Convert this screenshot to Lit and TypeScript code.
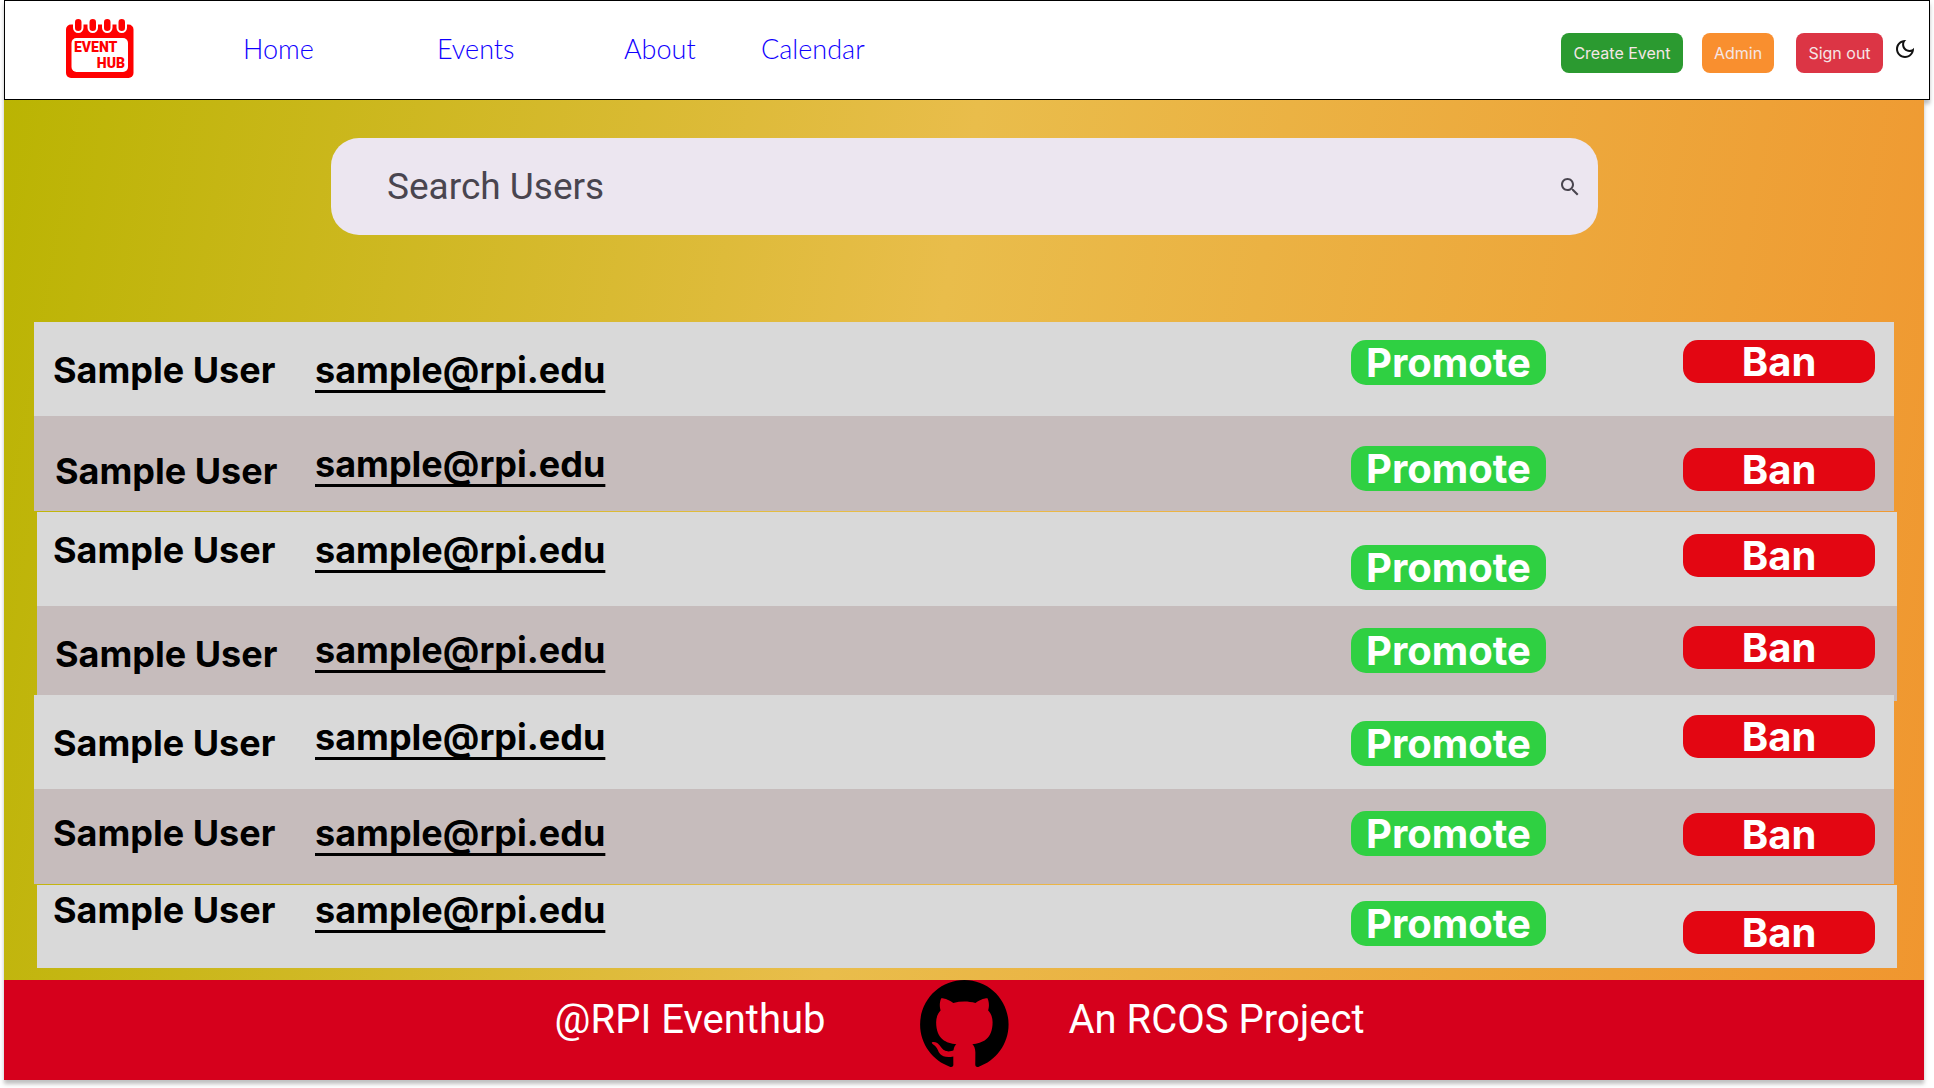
import { LitElement, html, css, svg } from "lit";
import { customElement, property } from "lit/decorators.js";
import { classMap } from "lit/directives/class-map.js";

interface UserRow {
  name: string;
  email: string;
  // Vertical step of each cell: name, email, promote, ban.
  steps: [number, number, number, number];
  shade?: boolean;
  inset?: boolean;
  nudge?: boolean;
  split?: boolean;
  tuck?: boolean;
  short?: boolean;
}

const NAME = "Sample User";
const EMAIL = "sample@rpi.edu";

const USERS: UserRow[] = [
  { name: NAME, email: EMAIL, steps: [26, 26, 18, 18] },
  { name: NAME, email: EMAIL, steps: [33, 26, 30, 32], shade: true, nudge: true },
  { name: NAME, email: EMAIL, steps: [16, 16, 33, 22], inset: true, split: true },
  { name: NAME, email: EMAIL, steps: [26, 22, 22, 20], shade: true, inset: true, nudge: true, tuck: true },
  { name: NAME, email: EMAIL, steps: [26, 20, 26, 20] },
  { name: NAME, email: EMAIL, steps: [22, 22, 22, 24], shade: true },
  { name: NAME, email: EMAIL, steps: [3, 3, 16, 26], inset: true, split: true, short: true },
];

const logo = svg`
  <svg class="logo" viewBox="0 0 68 60" role="img" aria-label="Event Hub">
    <rect x="0" y="5.5" width="67.5" height="53.5" rx="5" fill="#ff0000" />
    <g fill="#ff0000" stroke="#ffffff" stroke-width="2">
      <rect x="8" y="-1" width="8.5" height="14" rx="4.2" />
      <rect x="22.5" y="-1" width="8.5" height="14" rx="4.2" />
      <rect x="37" y="-1" width="8.5" height="14" rx="4.2" />
      <rect x="51.5" y="-1" width="8.5" height="14" rx="4.2" />
    </g>
    <rect x="5.5" y="19" width="56.5" height="34" rx="5" fill="#ffffff" />
    <text x="8" y="33" class="logo-text">EVENT</text>
    <text x="59" y="49" class="logo-text" text-anchor="end">HUB</text>
  </svg>`;

const moonIcon = svg`
  <svg class="icon" viewBox="0 0 24 24" aria-hidden="true">
    <path fill="currentColor" d="M9.37,5.51C9.19,6.15,9.1,6.82,9.1,7.5c0,4.08,3.32,7.4,7.4,7.4c0.68,0,1.35-0.09,1.99-0.27C17.45,17.19,14.93,19,12,19c-3.86,0-7-3.14-7-7C5,9.07,6.81,6.55,9.37,5.51z M12,3c-4.97,0-9,4.03-9,9s4.03,9,9,9s9-4.03,9-9c0-0.46-0.04-0.92-0.1-1.36c-0.98,1.37-2.58,2.26-4.4,2.26c-2.98,0-5.4-2.42-5.4-5.4c0-1.81,0.89-3.42,2.26-4.4C12.92,3.04,12.46,3,12,3z" />
  </svg>`;

const searchIcon = svg`
  <svg class="icon" viewBox="0 0 24 24" aria-hidden="true">
    <path fill="currentColor" d="M15.5 14h-.79l-.28-.27C15.41 12.59 16 11.11 16 9.5 16 5.91 13.09 3 9.5 3S3 5.91 3 9.5 5.91 16 9.5 16c1.61 0 3.09-.59 4.23-1.57l.27.28v.79l5 4.99L20.49 19l-4.99-5zm-6 0C7.01 14 5 11.99 5 9.5S7.01 5 9.5 5 14 7.01 14 9.5 11.99 14 9.5 14z" />
  </svg>`;

const githubIcon = svg`
  <svg class="github" viewBox="0 0 98 96" aria-hidden="true">
    <path fill="#000000" fill-rule="evenodd" d="M48.854 0C21.839 0 0 22 0 49.217c0 21.756 13.993 40.172 33.405 46.69 2.427.49 3.316-1.059 3.316-2.362 0-1.141-.08-5.052-.08-9.127-13.59 2.934-16.42-5.867-16.42-5.867-2.184-5.704-5.42-7.17-5.42-7.17-4.448-3.015.324-3.015.324-3.015 4.934.326 7.523 5.052 7.523 5.052 4.367 7.496 11.404 5.378 14.235 4.074.404-3.178 1.699-5.378 3.074-6.6-10.839-1.141-22.243-5.378-22.243-24.283 0-5.378 1.94-9.778 5.014-13.2-.485-1.222-2.184-6.275.486-13.038 0 0 4.125-1.304 13.426 5.052a46.97 46.97 0 0 1 12.214-1.63c4.125 0 8.33.571 12.213 1.63 9.302-6.356 13.427-5.052 13.427-5.052 2.67 6.763.97 11.816.485 13.038 3.155 3.422 5.015 7.822 5.015 13.2 0 18.905-11.404 23.06-22.324 24.283 1.78 1.548 3.316 4.481 3.316 9.126 0 6.6-.08 11.897-.08 13.526 0 1.304.89 2.853 3.316 2.364 19.412-6.52 33.405-24.935 33.405-46.691C97.707 22 75.788 0 48.854 0z" />
  </svg>`;

@customElement("site-header")
export class SiteHeader extends LitElement {
  static styles = css`
    :host {
      display: block;
    }
    .bar {
      box-sizing: border-box;
      display: flex;
      align-items: flex-start;
      min-height: 100px;
      padding: 0 12px 0 61px;
      border: 1px solid #000000;
      background: #ffffff;
      box-shadow: 0 4px 4px rgba(0, 0, 0, 0.25);
    }
    .home {
      display: block;
      margin-top: 18px;
    }
    .logo {
      display: block;
      width: 68px;
      height: 60px;
    }
    .logo-text {
      font: 900 14px Roboto, sans-serif;
      fill: #ff0000;
    }
    .nav {
      display: grid;
      grid-template-columns: 194px 187px 137px auto;
      margin: 30px 0 0 109px;
    }
    .link {
      font: 300 27px/36px Lato, sans-serif;
      color: #1000ff;
      text-decoration: none;
    }
    .actions {
      display: flex;
      align-items: flex-start;
      margin: 32px 0 0 auto;
    }
    .button {
      height: 40px;
      padding: 0;
      border: 0;
      border-radius: 8px;
      font: 400 16px/24px Inter, sans-serif;
      color: #f5e6e6;
    }
    .create {
      width: 122px;
      margin-right: 19px;
      background: #2b9a30;
    }
    .admin {
      width: 72px;
      margin-right: 22px;
      background: #f98f2f;
    }
    .signout {
      width: 87px;
      margin-right: 10px;
      background: #dc3545;
    }
    .theme {
      margin-top: 4px;
      padding: 0;
      border: 0;
      background: none;
      color: #111111;
    }
    .icon {
      display: block;
      width: 24px;
      height: 24px;
    }
  `;

  render() {
    return html`
      <header class="bar">
        <a class="home" href="#">${logo}</a>
        <nav class="nav">
          <a class="link" href="#home">Home</a>
          <a class="link" href="#events">Events</a>
          <a class="link" href="#about">About</a>
          <a class="link" href="#calendar">Calendar</a>
        </nav>
        <div class="actions">
          <button class="button create" type="button">Create Event</button>
          <button class="button admin" type="button">Admin</button>
          <button class="button signout" type="button">Sign out</button>
          <button class="theme" type="button" aria-label="Dark mode">${moonIcon}</button>
        </div>
      </header>
    `;
  }
}

@customElement("user-search")
export class UserSearch extends LitElement {
  static styles = css`
    :host {
      display: block;
    }
    .box {
      display: flex;
      align-items: center;
      min-height: 97px;
      padding: 0 16px 0 56px;
      border-radius: 28px;
      background: #ece6f0;
      color: #49454f;
    }
    .field {
      flex: 1;
      min-width: 0;
      padding: 0;
      border: 0;
      outline: 0;
      background: none;
      font: 400 37px/48px Roboto, sans-serif;
      color: inherit;
    }
    .field::placeholder {
      color: inherit;
      opacity: 1;
    }
    .go {
      padding: 0;
      border: 0;
      background: none;
      color: inherit;
    }
    .icon {
      display: block;
      width: 24px;
      height: 24px;
    }
  `;

  render() {
    return html`
      <form class="box" role="search" @submit=${(e: Event) => e.preventDefault()}>
        <input class="field" type="text" placeholder="Search Users" aria-label="Search Users" />
        <button class="go" type="submit" aria-label="Search">${searchIcon}</button>
      </form>
    `;
  }
}

@customElement("user-table")
export class UserTable extends LitElement {
  static styles = css`
    :host {
      display: block;
    }
    .table,
    .body {
      display: flex;
      flex-direction: column;
    }
    .row {
      box-sizing: border-box;
      display: grid;
      grid-template-columns: 262px 1fr 332px 192px;
      align-items: start;
      min-height: 94px;
      margin-right: 3px;
      padding: 0 19px;
      background: #d9d9d9;
      font: 700 36px/44px Inter, sans-serif;
      color: #000000;
    }
    .shade {
      min-height: 95px;
      background: #c6bcbc;
    }
    .inset {
      margin-right: 0;
      margin-left: 3px;
      padding: 0 22px 0 16px;
    }
    .split {
      margin-top: 1px;
    }
    .tuck {
      margin-bottom: -6px;
    }
    .short {
      min-height: 83px;
    }
    .cell {
      padding: 0;
      font: inherit;
      text-align: left;
    }
    .nudge .name {
      padding-left: 2px;
    }
    .step-3 {
      margin-top: 3px;
    }
    .step-16 {
      margin-top: 16px;
    }
    .step-18 {
      margin-top: 18px;
    }
    .step-20 {
      margin-top: 20px;
    }
    .step-22 {
      margin-top: 22px;
    }
    .step-24 {
      margin-top: 24px;
    }
    .step-26 {
      margin-top: 26px;
    }
    .step-30 {
      margin-top: 30px;
    }
    .step-32 {
      margin-top: 32px;
    }
    .step-33 {
      margin-top: 33px;
    }
    .email {
      color: inherit;
      text-decoration: underline;
      text-decoration-thickness: 3px;
      text-underline-offset: 7px;
      text-decoration-skip-ink: none;
    }
    .action {
      display: block;
      padding: 0;
      border: 0;
      border-radius: 15px;
      font: 700 40px/43px Inter, sans-serif;
      color: #ffffff;
    }
    .promote {
      width: 195px;
      height: 45px;
      background: #2fd042;
    }
    .ban {
      width: 192px;
      height: 43px;
      background: #e30612;
    }
  `;

  @property({ attribute: false }) users: UserRow[] = [];

  private row(user: UserRow) {
    const [name, email, promote, ban] = user.steps;
    const classes = {
      row: true,
      shade: !!user.shade,
      inset: !!user.inset,
      nudge: !!user.nudge,
      split: !!user.split,
      tuck: !!user.tuck,
      short: !!user.short,
    };
    return html`
      <tr class=${classMap(classes)}>
        <th class="cell name step-${name}" scope="row">${user.name}</th>
        <td class="cell step-${email}">
          <a class="email" href="mailto:${user.email}">${user.email}</a>
        </td>
        <td class="cell step-${promote}">
          <button class="action promote" type="button">Promote</button>
        </td>
        <td class="cell step-${ban}">
          <button class="action ban" type="button">Ban</button>
        </td>
      </tr>
    `;
  }

  render() {
    return html`
      <table class="table" aria-label="Users">
        <tbody class="body">
          ${this.users.map((user) => this.row(user))}
        </tbody>
      </table>
    `;
  }
}

@customElement("site-footer")
export class SiteFooter extends LitElement {
  static styles = css`
    :host {
      display: block;
    }
    .bar {
      display: grid;
      grid-template-columns: 1fr 89px 1fr;
      align-items: start;
      min-height: 100px;
      background: #d6001c;
      font: 400 40px/48px Roboto, sans-serif;
      color: #ffffff;
    }
    .left {
      padding: 16px 94px 0 0;
      text-align: right;
    }
    .right {
      padding: 16px 0 0 60px;
    }
    .github {
      display: block;
      width: 89px;
      height: 87px;
    }
  `;

  render() {
    return html`
      <footer class="bar">
        <span class="left">@RPI Eventhub</span>
        <a href="#github" aria-label="GitHub">${githubIcon}</a>
        <span class="right">An RCOS Project</span>
      </footer>
    `;
  }
}

@customElement("app-root")
export class AppRoot extends LitElement {
  static styles = css`
    :host {
      display: block;
      padding: 0 4px 8px;
      background: #ffffff;
    }
    .page {
      position: relative;
      margin-right: 6px;
      box-shadow: 0 4px 4px rgba(0, 0, 0, 0.25);
    }
    .content {
      padding: 38px 27px 12px 30px;
      background: linear-gradient(100deg, #bab402 0%, #e9bd4b 47%, #f0962f 100%);
    }
    .search {
      margin: 0 299px 87px 297px;
    }
  `;

  render() {
    return html`
      <site-header></site-header>
      <div class="page">
        <main class="content">
          <user-search class="search"></user-search>
          <user-table .users=${USERS}></user-table>
        </main>
        <site-footer></site-footer>
      </div>
    `;
  }
}
